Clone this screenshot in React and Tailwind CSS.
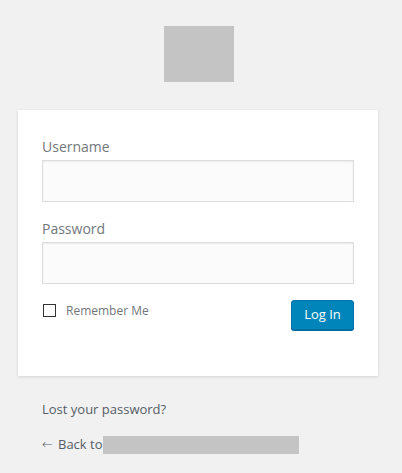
import React from "react";

const App = () => {
  return (
    <div className="min-h-[473px] w-full bg-[#f1f1f1] font-['Open_Sans',sans-serif]">
      <div className="ml-[18px] w-[360px] pt-[26px]">
        <div className="flex justify-center">
          <div className="h-[56px] w-[70px] bg-[#c4c4c4] ml-[2px]" />
        </div>

        <form className="mt-[28px] bg-white px-[24px] pt-[26px] pb-[46px] shadow-[0_1px_3px_rgba(0,0,0,0.13)]">
          <label className="block text-[14px] leading-[21px] text-[#72777c]">
            Username
            <input
              type="text"
              className="mt-[3px] mb-[16px] block h-[42px] w-full border border-[#ddd] bg-[#fbfbfb] px-[3px] shadow-[inset_0_1px_2px_rgba(0,0,0,0.07)] outline-none"
            />
          </label>
          <label className="block text-[14px] leading-[21px] text-[#72777c]">
            Password
            <input
              type="password"
              className="mt-[3px] mb-[16px] block h-[42px] w-full border border-[#ddd] bg-[#fbfbfb] px-[3px] shadow-[inset_0_1px_2px_rgba(0,0,0,0.07)] outline-none"
            />
          </label>
          <div className="flex items-start justify-between">
            <label className="mt-[1px] flex items-center text-[12px] leading-[19px] text-[#72777c]">
              <span className="ml-[1px] mr-[10px] inline-block h-[13px] w-[13px] border border-[#333] bg-white" />
              Remember Me
            </label>
            <button
              type="button"
              className="h-[30px] w-[63px] rounded-[3px] border border-[#0073aa] bg-[#0085ba] text-[13px] text-white shadow-[0_1px_0_#006799]"
            >
              Log In
            </button>
          </div>
        </form>

        <div className="px-[24px] text-[13px] leading-[19px] text-[#555d66]">
          <p className="mt-[24px]">Lost your password?</p>
          <p className="mt-[16px] flex items-center">
            <span className="w-[16px] font-['DejaVu_Sans',sans-serif] text-[13px] font-light leading-[19px]">←</span>
            <span>Back to</span>
            <span className="inline-block h-[18px] w-[196px] bg-[#c4c4c4]" />
          </p>
        </div>
      </div>
    </div>
  );
};

export default App;
